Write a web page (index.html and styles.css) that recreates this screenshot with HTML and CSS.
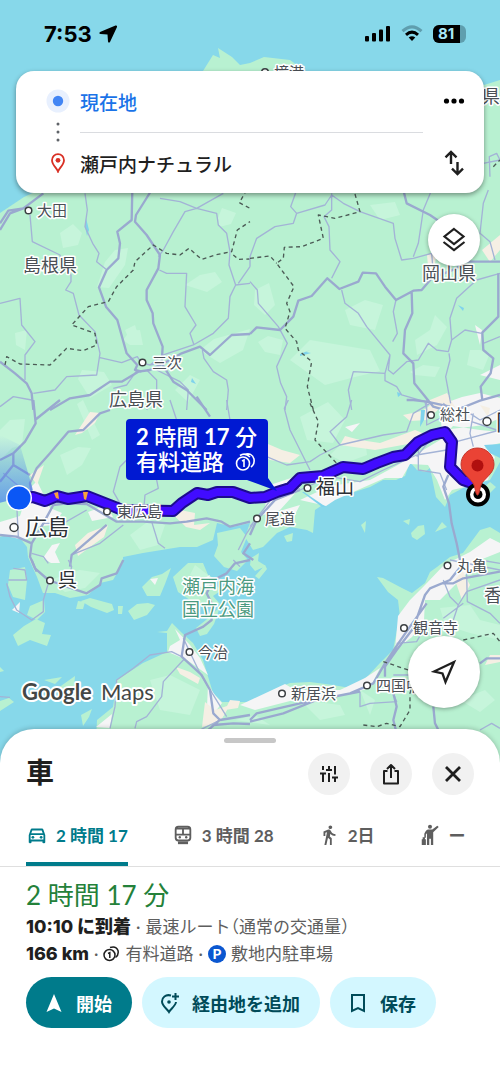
FILE: index.html
```html
<!DOCTYPE html>
<html lang="ja">
<head>
<meta charset="utf-8">
<meta name="viewport" content="width=device-width, initial-scale=1">
<title>ルート</title>
<link rel="stylesheet" href="styles.css">
</head>
<body>
<main class="map-area">
  <svg class="map" viewBox="0 0 500 790" preserveAspectRatio="xMidYMin slice" role="img" aria-label="地図">
    <defs>
      <linearGradient id="beam" x1="0" y1="1" x2="0" y2="0">
        <stop offset="0" stop-color="#3f78f0" stop-opacity=".75"/>
        <stop offset="1" stop-color="#3f78f0" stop-opacity="0"/>
      </linearGradient>
    </defs>
    <!-- land -->
    <g class="land">
      <path d="M0 213 24 197 50 185 120 130 203 71 213 55 220 58 218 48 232 57 240 65 250 63 264 57 290 60 305 71 400 100 484 85 500 80V462L490 480 465 487 450 495 445 507 436 497 430 468 425 472 417 470 410 462 405 476 396 480 383 480 370 487 345 495 330 500 315 510 313 533 307 530 290 527 277 533 263 547 253 550 245 537 250 523 233 527 217 523 213 540 197 547 180 547 143 553 123 557V563L113 580 100 583 88 595 70 598 55 593 43 593 37 577 28 557 27 547 20 538 7 535 0 537Z"/>
      <path d="M96 740 97 720 113 707 117 680 143 663 167 652 167 633 157 632 167 631 172 623 182 633 193 643 203 660 213 693 222 702H250L273 690 290 683 310 682 333 685 350 688 367 677 380 663 393 650 397 630 400 617 398 600 388 592 377 577 383 578 400 587 412 593 425 583 430 572 437 567 450 557 463 553 480 530 490 527 500 533V790H96Z"/>
      <path d="M10 570 25 567 27 580 25 600 13 597 8 585ZM30 606 44 600 45 612 37 620 27 615ZM13 635 24 626 36 619 45 623 42 634 51 635 47 646 30 640 18 646ZM81 601 90 598 112 604 114 610 107 613 91 607ZM78 601 85 602 83 609 76 609ZM128 611 137 604 148 603 155 605 147 615 134 620ZM118 606 123 606 122 614 118 614ZM142 587 152 577 162 574 171 568 165 584 160 596 147 596ZM173 577 188 563 203 563 211 582 222 590 213 596 220 604 205 608 190 600 178 592ZM196 628 206 620 220 607 214 624 207 634 200 636ZM217 533 240 528 247 537 241 552 248 560 237 571 224 567 214 556 218 545ZM251 558 259 553 258 561 266 566 255 571 250 565ZM361 525 366 521 365 533ZM403 521 410 519 409 525ZM411 533 418 526 424 525 425 534 417 540 412 537ZM435 532 442 522 447 527ZM0 667 4 671 0 672ZM0 701 9 698 14 702 0 711ZM58 688 75 676 74 688 64 693ZM81 715 92 709 89 717 83 726ZM44 680 62 677 55 684ZM255 576 265 565 267 569 259 579ZM284 536 293 533 292 541 287 542ZM483 488 490 482 496 487 490 493Z"/>
    </g>
    <!-- vegetation shades -->
    <g class="veg">
      <path d="M60 233 73 224 82 233 78 245 63 248ZM105 262 115 250 128 248 125 265 109 288 97 287ZM218 218 222 208 236 213 231 224 219 227ZM185 285 200 275 215 272 222 282 207 292ZM130 331 140 330 143 345 130 345 123 340ZM200 350 214 339 250 329 243 350 220 363 207 355ZM78 379 82 370 104 372 112 385 90 398ZM255 290 269 283 275 305 265 315 254 305ZM258 342 268 336 283 340 280 355 265 352ZM290 360 310 340 370 350 380 371 355 377 325 385ZM345 310 365 300 383 305 375 330 350 325ZM415 340 430 330 435 315 447 327 437 345 417 355ZM410 372 423 365 440 367 435 377 415 375ZM470 350 480 350 490 353 483 370 467 365ZM300 417 328 402 345 420 333 443 307 440ZM25 419 10 420 0 430V460L12 448 22 445ZM77 404 83 400 90 415 100 435 92 440ZM60 455 78 447 91 448 82 465 67 475ZM330 455 345 440 365 439 367 455 345 463ZM125 330 135 325 138 335 128 337ZM15 333 27 330 25 350 16 345ZM175 390 190 375 200 380 188 402ZM370 205 395 202 400 215 380 220Z"/>
      <path d="M130 535 150 520 165 525 158 545 140 550ZM440 608 470 605 480 620 500 625V640L470 633 445 625ZM150 680 170 675 200 690 190 715 160 710ZM300 700 340 705 345 715 320 720ZM360 690 375 700 370 715ZM220 582 208 575 195 565 190 575ZM460 700 485 690 495 700 480 712ZM235 720 255 715 270 725ZM50 580 80 570 100 573 85 588 65 592Z"/>
    </g>
    <!-- towns -->
    <g class="town">
      <path d="M28 490 37 481 50 508 62 513 52 525 35 527 25 540 0 535V522L20 516ZM88 512 107 505 113 517 92 521ZM43 558 52 545 60 543 55 552 60 563 51 563ZM300 500 330 486 370 480 396 466 415 455 440 440 453 426 480 430 500 432V443L485 447 495 457 488 480 465 487 452 490 445 500 437 480 428 465 410 464 402 478 385 478 335 500 326 506 318 504ZM270 485 300 475 300 488 280 510 263 515ZM283 510 300 505 292 520 280 522ZM170 646 180 640 175 629 190 645 200 658 208 675 187 660 168 652ZM208 685 215 695 222 703 215 712 207 707ZM398 616 410 600 425 585 444 565 470 552 490 538 500 543V552L480 560 455 585 440 600 425 600 424 620 412 637 395 650ZM240 705 285 684 295 690 340 690 365 678 380 668 370 688 345 695 290 701 255 710ZM96 727 112 714 110 728ZM12 610 20 602 19 613ZM150 579 158 578 155 585ZM500 398 480 393 462 397 448 402 440 415 442 430 485 425 500 418ZM345 427 360 423 352 432ZM480 375 500 365V380ZM475 325 482 330 480 345ZM195 583 210 575 205 590Z"/>
    </g>
    <g class="suburb">
      <path d="M75 435 90 412 100 413 95 423 82 433ZM75 545 88 533 108 525 104 537 90 547 78 556ZM165 507 195 513 194 525 210 523 200 530 186 527ZM30 475 44 465 37 485ZM262 455 268 444 282 450 300 455 290 463 270 460ZM340 445 345 436 360 440 380 443 415 430 430 436 408 444 375 450ZM403 415 422 411 435 402 450 394 443 405 427 420 410 421ZM427 255 437 250 434 270 428 266ZM482 250 500 235V250L490 262ZM425 402 447 393 455 407 436 410ZM176 667 190 672 200 678 198 684 180 674ZM230 700 240 701 238 708 225 710ZM205 702 215 710 230 705 220 722 202 727ZM455 580 462 570 470 585 462 600ZM490 655 500 655V662L485 665ZM480 405 490 408 488 417Z"/>
    </g>
    <g class="water">
      <path d="M86 218 89 230 87 236 85 226ZM192 378 196 384 191 382ZM458 305 464 308 463 311ZM300 354 310 350 306 352 311 353 300 356ZM397 392 402 394 398 397ZM304 492 326 507 322 507 302 492ZM421 410 425 410 424 420 420 427ZM484 445 500 444V458L490 453Z"/>
    </g>

    <!-- roads, drawn tile by tile -->
    <g transform="translate(0 190) scale(.3333)">
      <path class="road" d="M90 75 97 155 180 195 187 225 213 255V275L197 300 220 310 237 375 285 425 300 490 290 555 200 560 165 600 100 610M255 10 262 60 255 110 278 160 297 190 290 215 318 238M0 340 60 325 65 405 105 455 75 495V570M300 503 365 518 412 500 425 520M480 25 540 35 590 55 650 70 655 105 680 130 690 185 687 225 707 285 690 320 685 385 640 430 580 465 490 495 450 525M670 10 590 55 555 65 520 125 490 180 475 200M478 240 500 250 560 250 555 350 588 405 570 430 582 465M607 480 612 505 640 545 680 570 685 600 680 660M440 540 470 570V610L440 660M470 540 540 575 565 600 560 660M707 285 750 280M715 280 750 230M0 650 40 620 95 630M430 520 450 525 500 515M412 540 380 585 340 595"/>
      <path class="highway" d="M397 0 395 90 352 125 360 160 355 205 320 240 297 292 318 350 352 390 380 490 412 525 405 540 425 545M455 0 408 75 405 95 440 135 480 195 475 235 440 300V330L458 370 460 400 488 470 485 520 520 575 560 600 620 660M0 120 30 70 70 55 130 10M0 100 25 62 70 55M0 515 45 550 80 580 95 610 100 660M150 660 210 625 270 615 330 575 365 575 415 545 450 540 500 515 545 490 600 470 630 495 695 435 750 432"/>
      <path class="border" d="M15 525 20 500 60 522 150 525 200 475 250 482 290 465 285 430 215 405 265 350 325 335 350 290 400 240 405 215 460 165 500 190 540 195 567 175 605 208 645 195 695 185 712 120 750 95M700 195 715 208 750 207M740 0 718 38 750 55"/>
    </g>
    <g transform="translate(250 190) scale(.3333)">
      <path class="road" d="M140 0 122 50 140 70 225 45 245 15 280 40 330 65 430 100 435 145 455 210 490 205 545 190 550 250M140 70 130 100 75 110 20 145 0 200V230M245 10V60L222 80 237 110 240 180 270 215 245 265M0 275 22 300 25 340 85 410 112 460 80 530 92 580 110 620 105 660M275 300 285 340 325 370 350 410 420 495 405 550 310 545 295 600 305 660M438 330 430 365 442 430 428 455M420 495 415 540 430 552 470 515 505 510 535 460 560 480 595 485 605 450 645 420 695 430M605 450 600 385 620 325 680 270 750 250M597 490 600 510 587 560 602 640M405 550V572L440 590 455 615 525 635 530 660M545 0 520 60 505 160 490 200M715 0 700 40 690 130 720 155 735 210M700 460 750 440M690 -60 700 -80 750 -90M720 -40 718 -100 740 -110 750 -90"/>
      <path class="highway" d="M0 432 20 412 90 420 130 380 145 332 185 318 232 265 268 297 325 275 338 248 378 250 405 290 438 330 490 302 515 300 545 265 620 235 640 215 750 215M460 0 470 40 540 75 620 130M485 305 487 370 465 420 460 490 490 520 493 580 550 650 600 665M745 250V380L697 428 700 480 730 505 722 550 692 590 697 630M620 660 690 632 750 615"/>
      <path class="border" d="M315 12 330 65 255 85 205 75 220 145 155 170 103 172 100 205 80 220 132 290 110 340 120 365 105 415 140 455 145 480 185 515 172 590 190 660M0 205 60 198 80 220M730 -70 750 -90"/>
    </g>
    <g transform="translate(0 400) scale(.3333)">
      <path class="road" d="M380 180 360 200 340 275 360 310M470 240 475 265 435 285 432 320M455 365 475 430 495 445M510 0 530 60M680 0 690 60M50 310 55 410M70 270 10 220M215 465 300 430 370 375M130 370 190 370 260 330M95 460 130 470 145 490M715 450 740 400 760 370M700 480 720 500"/>
      <path class="highway" d="M100 0 107 70 75 125 40 160V195L90 225M40 160 0 180M180 0 105 60M40 195 0 245M330 30 300 40 250 90 205 95 150 160 110 205 90 250 95 280M0 405 50 410 95 430 130 370 160 315 200 310 260 312 350 365 430 365 510 370 560 365 620 355 665 365 690 380 750 365M320 375 250 435 215 465 210 500M95 430 90 470 110 515M590 -10 630 50M750 430 730 460 760 480"/>
    </g>
    <g transform="translate(250 400) scale(.3333)">
      <path class="road" d="M115 0 103 25 120 90 150 150 180 210M305 0 290 50 240 95 270 135 400 105 470 95 490 40 540 10M50 170 110 195 180 185 210 165 270 135M150 270 240 230 330 245 400 210 500 165 590 150M505 150V210L570 220 590 270M580 10 620 50 740 90M600 130 750 90M670 140 660 100 670 40M530 0V75L640 20M0 380 70 290 150 265M660 40 690 60 750 30M580 100 540 120 500 170"/>
      <path class="highway" d="M0 405 20 360 75 300 150 270M595 225 580 260 597 310 605 370 620 430 630 480M470 0 490 0 530 5 600 20"/>
      <path class="border" d="M180 10 205 65 195 120 260 190"/>
    </g>
    <g transform="translate(0 560) scale(.3333)">
      <path class="road" d="M545 290 515 275 450 285 400 325 350 360 345 440 330 505M555 295 490 365 485 410 440 470 410 485 405 505M550 235 600 340 680 470M20 70 30 110 50 150 95 180 130 155V120L145 70M25 60 80 60 75 30 40 25M205 0 215 20 200 80M0 410 30 412M660 480 580 520"/>
      <path class="highway" d="M95 0 105 25 145 60 200 80 260 100 300 75 305 55 350 40 370 0M750 0 705 10 680 40 640 60 620 100 635 130V180L610 200 555 225 545 290 605 345 630 390 640 460 660 480M590 540 660 480 750 465M600 540 640 495 700 490 750 492"/>
    </g>
    <g transform="translate(250 560) scale(.3333)">
      <path class="road" d="M330 395V440L360 430 440 425 430 400M580 60 600 110 625 135 610 180M625 135 650 95 750 60M580 175 640 130M650 40 652 125 720 160 750 190M440 250 500 245 520 210M690 510 725 490 750 505M430 345 480 345M600 0 750 30M690 0 750 10"/>
      <path class="highway" d="M0 480 20 460 150 430 300 400 370 370 405 310 445 250 480 200 530 130M0 485 100 460 200 420 330 395M405 350V320L440 270 490 205 525 105 540 85 600 60 640 10M430 400 440 440 430 480 440 520M550 440 555 490 570 520M690 310 710 295 750 295M575 70 610 70 640 55 750 35"/>
      <path class="border" d="M400 305 430 315 475 330M340 495 380 500 410 490 450 500 480 450 480 400 490 370M640 240 730 220 750 245"/>
    </g>

    <!-- route -->
    <path class="beam" d="M-30 440 0 435 20 445 33 490 19 498-30 510Z"/>
    <path class="route-edge" d="M19 498 33 497 45 501 57 496 68 499 87 496 115 507 122 510 173 511 182 503 197 493 208 495 217 492H233L250 498 265 497 277 492 290 488 300 478 323 476 343 467 363 469 377 463 393 457 405 455 418 442 432 435 445 432 452 442 450 467 463 480 472 483 478 490"/>
    <path class="route" d="M19 498 33 497 45 501 57 496 68 499 87 496 115 507 122 510 173 511 182 503 197 493 208 495 217 492H233L250 498 265 497 277 492 290 488 300 478 323 476 343 467 363 469 377 463 393 457 405 455 418 442 432 435 445 432 452 442 450 467 463 480 472 483 478 490"/>
    <path class="traffic" d="M54 493 58 492 59 499 56 498ZM83 492H88L86 500 84 499Z"/>

    <!-- place names -->
    <g class="dots">
      <circle cx="28.500" cy="210.500" r="3.300"/>
      <circle cx="142.500" cy="362.500" r="3.300"/>
      <circle cx="107" cy="511.500" r="3.300"/>
      <circle cx="257" cy="518.500" r="3.300"/>
      <circle cx="307.500" cy="488" r="3.300"/>
      <circle cx="431" cy="415" r="3.300"/>
      <circle cx="50" cy="580.500" r="3.300"/>
      <circle cx="189.500" cy="652" r="3.300"/>
      <circle cx="282" cy="693.500" r="3.300"/>
      <circle cx="367" cy="685.500" r="3.300"/>
      <circle cx="404" cy="628" r="3.300"/>
      <circle cx="447.500" cy="565.500" r="3.300"/>
      <circle cx="265" cy="72" r="3.300"/>
      <circle cx="14" cy="527.500" r="4"/>
      <circle cx="487" cy="421.500" r="4"/>
    </g>
    <g class="place">
      <text x="37" y="216">大田</text>
      <text x="152" y="368">三次</text>
      <text x="117" y="517">東広島</text>
      <text x="265" y="524">尾道</text>
      <text x="440" y="420">総社</text>
      <text x="198" y="658">今治</text>
      <text x="291" y="699">新居浜</text>
      <text x="376" y="691">四国中央</text>
      <text x="413" y="633">観音寺</text>
      <text x="457" y="571">丸亀</text>
      <text x="274" y="78">境港</text>
    </g>
    <g class="place pref">
      <text x="23" y="272">島根県</text>
      <text x="109" y="406">広島県</text>
      <text x="422" y="280">岡山県</text>
      <text x="484" y="602">香川県</text>
      <text x="482" y="103">県</text>
    </g>
    <g class="place city">
      <text x="25" y="535">広島</text>
      <text x="496" y="430">岡山</text>
      <text class="city-mid" x="316" y="494">福山</text>
      <text class="city-mid" x="58" y="587">呉</text>
    </g>
    <g class="place park">
      <text x="182" y="593">瀬戸内海</text>
      <text x="182" y="616">国立公園</text>
    </g>
    <g class="brand">
      <text class="brand-name" x="22" y="700">Google</text>
      <text x="101" y="700">Maps</text>
    </g>

    <!-- route time bubble -->
    <g class="bubble">
      <path d="M130 419H264Q268 419 268 423V478L277 491 247 480H130Q126 480 126 476V423Q126 419 130 419Z"/>
      <text x="136" y="445"><tspan class="num">2</tspan> 時間 <tspan class="num">17</tspan> 分</text>
      <text x="136" y="470">有料道路</text>
      <g class="coin">
        <circle cx="243" cy="463.500" r="6.500"/>
        <path d="M242 461 244 460V467M244 454.500Q252 452 254 459 255 464 251 467M240 455.500Q245 452 250 457"/>
      </g>
    </g>

    <!-- current position and destination -->
    <circle cx="19" cy="498" r="13" fill="#fff"/>
    <circle cx="19" cy="498" r="11.500" fill="#0b57f5"/>
    <circle cx="478" cy="494.500" r="10" fill="#fff" stroke="#000" stroke-width="4"/>
    <circle cx="478" cy="494.500" r="4.500"/>
    <path d="M477.500 495C476 495 475.500 490 474 485 471 478 461 474 461 464.500A16.500 16.500 0 0 1 494 464.500C494 474 484 478 481 485 479.500 490 479 495 477.500 495Z" fill="#ea4335" stroke="#c5372c"/>
    <circle cx="477.500" cy="465.500" r="6" fill="#b00f0f"/>
  </svg>

  <header class="status">
    <div class="status-left">
      <span>7:53</span>
      <svg width="20" height="20" viewBox="0 0 20 20"><path d="M17.500 1.500Q19.500 1 19 3L12 18Q10.500 19.500 10 17.500L9.500 10.500 2.500 10Q.5 9.500 2 8Z"/></svg>
    </div>
    <div class="status-right">
      <svg width="26" height="17" viewBox="0 0 26 17"><rect x="0" y="11" width="4" height="5.500" rx="1"/><rect x="7" y="8" width="4" height="8.500" rx="1"/><rect x="14" y="4.500" width="4" height="12" rx="1"/><rect x="21" y="1" width="4" height="15.500" rx="1"/></svg>
      <svg width="22" height="17" viewBox="0 0 22 17" fill="none" stroke-width="3"><path d="M1.500 6.200Q11-2.500 20.500 6.200" stroke="#5f9eae"/><path d="M5 9.800Q11 4.500 17 9.800" stroke="#000"/><path d="M11 16 7.700 12.600Q11 10 14.300 12.600Z" fill="#000" stroke="none"/></svg>
      <span class="battery"><span class="battery-level">81</span></span>
    </div>
  </header>

  <form class="directions">
    <svg class="mark" width="24" height="24" viewBox="0 0 24 24"><circle cx="12" cy="12" r="11.500" fill="#e8f0fe"/><circle cx="12" cy="12" r="5.200" fill="#4285f4"/></svg>
    <input class="stop origin" type="text" aria-label="出発地" value="現在地">
    <button class="plain" type="button" aria-label="その他"><svg width="22" height="8" viewBox="0 0 22 8"><circle cx="3.500" cy="4" r="2.600"/><circle cx="11" cy="4" r="2.600"/><circle cx="18.500" cy="4" r="2.600"/></svg></button>

    <svg class="mark trail" width="4" height="20" viewBox="0 0 4 20"><circle cx="2" cy="2" r="1.500"/><circle cx="2" cy="10" r="1.500"/><circle cx="2" cy="18" r="1.500"/></svg>
    <span class="rule"></span>

    <svg class="mark" width="16" height="20" viewBox="0 0 16 20"><path d="M8 18.500C7 15 2 12 2 7.200A6 6 0 0 1 14 7.200C14 12 9 15 8 18.500Z" fill="none" stroke="#d93025" stroke-width="1.800"/><circle cx="8" cy="7.300" r="2.400" fill="#d93025"/></svg>
    <input class="stop" type="text" aria-label="目的地" value="瀬戸内ナチュラル">
    <button class="plain" type="button" aria-label="入れ替え"><svg width="20" height="26" viewBox="0 0 20 26" fill="none" stroke="#1f1f1f" stroke-width="2.400"><path d="M7 14V2M1.500 7.300 7 2l5.500 5.300M13.500 12v12M8 18.700 13.500 24 19 18.700"/></svg></button>
  </form>

  <button class="fab layers" type="button" aria-label="レイヤ"><svg width="24" height="26" viewBox="0 0 24 26" fill="none" stroke="#1f1f1f" stroke-width="2.200"><path d="M12 2 21.500 9.500 12 17 2.500 9.500ZM1.500 15 12 23 22.500 15"/></svg></button>
  <button class="fab locate" type="button" aria-label="現在地を表示"><svg width="26" height="26" viewBox="0 0 26 26" fill="none" stroke="#1f1f1f" stroke-width="2.300"><path d="M23 3 3 12.500 11.500 14.500 14.500 23Z"/></svg></button>
</main>

<section class="sheet">
  <div class="handle"></div>
  <div class="sheet-head">
    <h1>車</h1>
    <button class="round" type="button" aria-label="オプション"><svg width="20" height="18" viewBox="0 0 20 18" fill="none" stroke="#1f1f1f" stroke-width="2"><path d="M4 1V5M1 8.500H7M4 8.500V17M10 1V5M7 5H13M10 8V17M16 1V9.500M13 12.500H19M16 12.500V17"/></svg></button>
    <button class="round" type="button" aria-label="共有"><svg width="18" height="22" viewBox="0 0 18 22" fill="none" stroke="#1f1f1f" stroke-width="2"><path d="M5.500 8H2V20.500H16V8H12.500M9 15V2M5 6 9 2 13 6" stroke-linejoin="round"/></svg></button>
    <button class="round" type="button" aria-label="閉じる"><svg width="18" height="18" viewBox="0 0 18 18" stroke="#1f1f1f" stroke-width="2.800"><path d="M2 2 16 16M16 2 2 16"/></svg></button>
  </div>

  <nav class="modes">
    <button class="mode active" type="button">
      <svg width="22" height="22" viewBox="0 0 24 24" fill="currentColor"><path d="M18.920 6.010C18.720 5.420 18.160 5 17.500 5h-11c-.66 0-1.210.42-1.420 1.010L3 12v8c0 .55.450 1 1 1h1c.55 0 1-.45 1-1v-1h12v1c0 .55.450 1 1 1h1c.55 0 1-.45 1-1v-8l-2.080-5.990zM6.850 7h10.290l1.080 3.110H5.770L6.850 7zM19 17H5v-5h14v5z"/><circle cx="7.500" cy="14.500" r="1.500"/><circle cx="16.500" cy="14.500" r="1.500"/></svg>
      2 時間 17
    </button>
    <button class="mode" type="button">
      <svg width="22" height="22" viewBox="0 0 24 24" fill="none" stroke="currentColor" stroke-width="2"><rect x="4" y="3" width="16" height="15" rx="3"/><path d="M4 5H20M4 11.500H20M12 4V11"/><circle cx="8.500" cy="14.500" r="1.300" fill="currentColor" stroke="none"/><circle cx="15.500" cy="14.500" r="1.300" fill="currentColor" stroke="none"/><path d="M6.500 20.500H17.500" stroke-width="3"/></svg>
      3 時間 28
    </button>
    <button class="mode" type="button">
      <svg width="22" height="22" viewBox="0 0 24 24" fill="currentColor"><path d="M13.500 5.500c1.100 0 2-.9 2-2s-.9-2-2-2-2 .9-2 2 .9 2 2 2zM9.800 8.900 7 23h2.100l1.800-8 2.100 2v6h2v-7.500l-2.100-2 .6-3C14.800 12 16.800 13 19 13v-2c-1.900 0-3.500-1-4.300-2.400l-1-1.600c-.4-.6-1-1-1.700-1-.3 0-.5.100-.8.100L6 8.300V13h2V9.600l1.800-.7"/></svg>
      2日
    </button>
    <button class="mode" type="button">
      <svg width="22" height="22" viewBox="0 0 24 24" fill="currentColor"><circle cx="12" cy="3" r="2.200"/><path d="M20 2 21.500 3.200 15.500 9V23H13V16H11.200V23H8.700V10L7.500 11.500V15H5.800V10.500Q8 6 10 6H14.500ZM3 16.500H7.500V23H3ZM4 14.500H6.500V16.500H4Z"/></svg>
      ー
    </button>
  </nav>

  <div class="summary">
    <p class="duration">2 時間 17 分</p>
    <p class="line"><b>10:10 に到着</b><i>·</i><span class="note">最速ルート（通常の交通量）</span></p>
    <p class="line"><b>166 km</b><i>·</i>
      <svg width="17" height="17" viewBox="0 0 17 17" fill="none" stroke="#1f1f1f" stroke-width="1.500"><circle cx="6.500" cy="10" r="5.500"/><path d="M5 8.500 6.800 7.700V13M7 2.500Q13 .5 15 5.500 16 10 12.500 12.500"/></svg>
      <span>有料道路</span><i>·</i><span class="parking">P</span><span>敷地内駐車場</span></p>
    <div class="actions">
      <button class="pill primary" type="button"><svg width="20" height="20" viewBox="0 0 20 20" fill="#fff"><path d="M10 1 17.500 19 10 15.500 2.500 19Z"/></svg>開始</button>
      <button class="pill" type="button"><svg width="20" height="22" viewBox="0 0 20 22" fill="none" stroke="#004b59" stroke-width="2"><path d="M11 3.500C5.500 2 2 5.500 2 9.500 2 14 7 16.500 9 20 11 16.500 15.500 14 16 10M15.500 1V8M12 4.500H19"/><circle cx="9" cy="10" r="1.800" fill="#004b59" stroke="none"/></svg>経由地を追加</button>
      <button class="pill" type="button"><svg width="20" height="20" viewBox="0 0 20 20" fill="none" stroke="#004b59" stroke-width="2"><path d="M4 2H16V18L10 15 4 18Z"/></svg>保存</button>
    </div>
  </div>
</section>
</body>
</html>
```

FILE: styles.css
```css
* {
    box-sizing: border-box;
}

body {
    margin: 0;
    background: #fff;
    color: #1f1f1f;
    font-family: Lato, "Noto Sans CJK JP", sans-serif;
    font-size: 17px;
}

h1, p {
    margin: 0;
}

button, input {
    border: none;
    margin: 0;
    padding: 0;
    background: none;
    font: inherit;
    color: inherit;
}

button {
    display: flex;
    align-items: center;
    justify-content: center;
    cursor: pointer;
}

svg {
    flex: none;
    display: block;
}

/* map */

.map-area {
    position: relative;
    display: flex;
    flex-direction: column;
    min-height: 790px;
    padding-bottom: 82px;
    overflow: hidden;
    background: #87d8ea;
}

.map {
    position: absolute;
    inset: 0;
    width: 100%;
    height: 100%;
}

.land { fill: #b8f1d1; }
.veg { fill: #c6f5db; }
.town { fill: #f5f5f6; }
.suburb { fill: #f5efe4; }
.water { fill: #7fd3ec; }

.road, .highway, .border {
    fill: none;
    stroke-linejoin: round;
}

.road {
    stroke: #a3b3d6;
    stroke-width: 4;
}

.highway {
    stroke: #9aa9cf;
    stroke-width: 7;
}

.border {
    stroke: #4b5a55;
    stroke-width: 4;
    stroke-dasharray: 12 10;
}

.beam { fill: url(#beam); }

.route-edge, .route {
    fill: none;
    stroke: #1d0b8f;
    stroke-width: 12;
    stroke-linejoin: round;
}

.route {
    stroke: #410cff;
    stroke-width: 8;
}

.traffic { fill: #f9a13a; }

.dots {
    fill: #fff;
    stroke: #3c4043;
    stroke-width: 1.5;
}

.place, .brand {
    fill: #4a4f55;
    stroke: #fff;
    stroke-width: 3;
    stroke-linejoin: round;
    paint-order: stroke;
    font-size: 15px;
}

.pref { font-size: 18px; }

.city {
    fill: #2c3035;
    font-size: 22px;
}

.city-mid { font-size: 19px; }

.park {
    fill: #4b9a80;
    font-size: 18px;
}

.brand {
    fill: #444746;
    stroke-width: 4;
    font-size: 22px;
}

.brand-name { font-weight: bold; }

.bubble {
    fill: #0019d2;
    font-size: 22px;
    font-weight: 500;
}

.bubble text { fill: #fff; }
.num { font-weight: 700; }

.coin {
    fill: none;
    stroke: #fff;
    stroke-width: 1.6;
}

/* status bar */

.status {
    position: relative;
    display: flex;
    justify-content: space-between;
    align-items: center;
    height: 67px;
    margin-bottom: 4px;
    padding: 0 34px 0 44px;
    font-family: Inter, sans-serif;
    font-weight: 700;
    font-size: 22px;
    color: #000;
}

.status-left, .status-right {
    display: flex;
    align-items: center;
    gap: 6px;
}

.status-right { gap: 10px; }

.battery {
    width: 33px;
    height: 18px;
    border-radius: 6px;
    overflow: hidden;
    background: #5f9eae;
}

.battery-level {
    display: block;
    width: 27px;
    padding-left: 5px;
    background: #000;
    color: #a9e8f7;
    font-size: 15px;
    line-height: 18px;
}

/* directions card */

.directions {
    position: relative;
    display: grid;
    grid-template-columns: 24px 1fr 32px;
    grid-template-rows: 46px 16px 46px;
    align-items: center;
    margin: 0 16px;
    padding: 7px 14px 7px 30px;
    border-radius: 18px;
    background: #fff;
    box-shadow: 0 2px 5px rgba(0, 0, 0, .4);
}

.mark { justify-self: center; }

.trail {
    fill: #5f6368;
    overflow: visible;
}

.stop {
    min-width: 0;
    margin: 0 10px;
    font-size: 19px;
    font-weight: 500;
}

.origin { color: #1a73e8; }

.rule {
    grid-column: 2 / 4;
    height: 1px;
    margin: 0 47px 0 10px;
    background: #dadce0;
}

.plain { height: 40px; }

.fab {
    position: relative;
    align-self: flex-end;
    width: 52px;
    height: 52px;
    margin: 21px 20px 0;
    border-radius: 50%;
    background: #fff;
    box-shadow: 0 1px 4px rgba(0, 0, 0, .35);
}

.locate {
    width: 72px;
    height: 72px;
    margin-top: auto;
}

/* bottom sheet */

.sheet {
    position: relative;
    margin-top: -61px;
    padding-bottom: 54px;
    border-radius: 34px 34px 0 0;
    background: #fff;
    box-shadow: 0 -1px 5px rgba(0, 0, 0, .2);
}

.handle {
    width: 52px;
    height: 5px;
    margin: 0 auto;
    border-radius: 3px;
    background: #c7c7c7;
    transform: translateY(9px);
}

.sheet-head {
    display: flex;
    align-items: center;
    gap: 20px;
    padding: 19px 26px 0;
}

.sheet-head h1 {
    flex: 1;
    font-size: 28px;
    line-height: 38px;
    padding-bottom: 4px;
}

.round {
    width: 42px;
    height: 42px;
    border-radius: 50%;
    background: #f1f1f1;
}

.modes {
    display: flex;
    gap: 44px;
    height: 72px;
    padding: 0 26px;
    border-bottom: 1px solid #dfdfdf;
    overflow: hidden;
}

.mode {
    gap: 8px;
    padding-top: 12px;
    border-bottom: 4px solid transparent;
    color: #5e5e5e;
    font-weight: 700;
    white-space: nowrap;
}

.active {
    border-color: #007b8b;
    color: #007b8b;
}

.summary { padding: 10px 26px 0; }

.duration {
    color: #24813a;
    font-size: 26px;
    line-height: 36px;
}

.line {
    display: flex;
    align-items: center;
    gap: 5px;
    line-height: 27px;
    color: #5e5e5e;
    white-space: nowrap;
}

.line b {
    font-family: Inter, "Noto Sans CJK JP", sans-serif;
    font-size: 18px;
    font-weight: 800;
    color: #1f1f1f;
}

.line i { font-style: normal; }

.note { font-feature-settings: "halt"; }

.parking {
    width: 18px;
    height: 18px;
    border-radius: 50%;
    background: #0b57d0;
    color: #fff;
    font-size: 14px;
    font-weight: 900;
    line-height: 18px;
    text-align: center;
}

.actions {
    display: flex;
    gap: 10px;
    padding-top: 10px;
}

.pill {
    gap: 12px;
    height: 51px;
    padding: 0 20px 0 18px;
    border-radius: 26px;
    background: #d3f7ff;
    color: #004b59;
    font-size: 18px;
    font-weight: 700;
    white-space: nowrap;
}

.primary {
    background: #007b8b;
    color: #fff;
}
```
